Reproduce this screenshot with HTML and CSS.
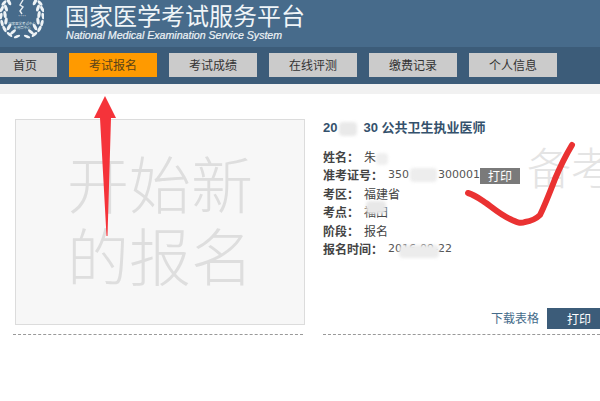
FILE: index.html
```html
<!DOCTYPE html>
<html lang="zh-CN">
<head>
<meta charset="utf-8">
<title>国家医学考试服务平台</title>
<link rel="stylesheet" href="styles.css">
</head>
<body>
<header class="masthead">
  <svg class="logo" viewBox="0 0 44 40" aria-hidden="true">
    <g class="leaves">
      <g id="wing">
        <ellipse cx="9" cy="2" rx="1.6" ry="3.6" transform="rotate(-28 9 2)"/>
        <ellipse cx="4" cy="3" rx="1.5" ry="3.4" transform="rotate(40 4 3)"/>
        <ellipse cx="6" cy="8" rx="1.6" ry="3.6" transform="rotate(-18 6 8)"/>
        <ellipse cx="1.8" cy="9" rx="1.5" ry="3.4" transform="rotate(28 1.8 9)"/>
        <ellipse cx="5" cy="14.5" rx="1.6" ry="3.6" transform="rotate(-8 5 14.5)"/>
        <ellipse cx="1" cy="16" rx="1.5" ry="3.4" transform="rotate(10 1 16)"/>
        <ellipse cx="6" cy="21" rx="1.6" ry="3.6" transform="rotate(8 6 21)"/>
        <ellipse cx="2" cy="23" rx="1.5" ry="3.4" transform="rotate(-12 2 23)"/>
        <ellipse cx="9" cy="27" rx="1.6" ry="3.6" transform="rotate(28 9 27)"/>
        <ellipse cx="4.5" cy="29" rx="1.5" ry="3.4" transform="rotate(-28 4.5 29)"/>
        <ellipse cx="13" cy="32" rx="1.5" ry="3.6" transform="rotate(48 13 32)"/>
        <ellipse cx="9.5" cy="34.5" rx="1.4" ry="3.4" transform="rotate(-50 9.5 34.5)"/>
        <ellipse cx="17" cy="36.5" rx="1.3" ry="3.4" transform="rotate(68 17 36.5)"/>
      </g>
      <use href="#wing" transform="matrix(-1 0 0 1 44 0)"/>
    </g>
    <path class="bolt" d="M23 0 L20 5 L23 7 L20 11 L22 14"/>
    <text class="logo-stars" x="22" y="17.5">* * * *</text>
    <text class="logo-text" x="22" y="24.5">国家医学考试中心</text>
    <text class="logo-text" x="22" y="29">专用章中心</text>
  </svg>
  <div class="brand">
    <h1 class="brand-cn">国家医学考试服务平台</h1>
    <p class="brand-en">National Medical Examination Service System</p>
  </div>
</header>

<nav class="nav">
  <a class="nav-item nav-first">首页</a>
  <a class="nav-item nav-active">考试报名</a>
  <a class="nav-item">考试成绩</a>
  <a class="nav-item">在线评测</a>
  <a class="nav-item">缴费记录</a>
  <a class="nav-item">个人信息</a>
</nav>
<div class="strip"></div>

<main class="main">
  <section class="left">
    <div class="new-card">开始新的报名</div>
  </section>
  <section class="right">
    <h2 class="title">20<span class="gap gap-title"></span>30 公共卫生执业医师</h2>
    <dl class="fields">
      <div class="field"><dt>姓名&#xFF1A;</dt><dd>朱<span class="gap gap-name"></span></dd></div>
      <div class="field"><dt>准考证号&#xFF1A;</dt><dd class="num">350<span class="gap gap-id"></span>300001<a class="print-small">打印</a></dd></div>
      <div class="field"><dt>考区&#xFF1A;</dt><dd>福建省</dd></div>
      <div class="field"><dt>考点&#xFF1A;</dt><dd class="covered cover-site">福田</dd></div>
      <div class="field"><dt>阶段&#xFF1A;</dt><dd>报名</dd></div>
      <div class="field"><dt>报名时间&#xFF1A;</dt><dd class="num covered cover-date">2016-09-22</dd></div>
    </dl>
    <div class="actions">
      <a class="download">下载表格</a>
      <a class="print-big">打印</a>
    </div>
    <div class="ghost">备考</div>
  </section>
</main>

<svg class="annotations" viewBox="0 0 600 401" aria-hidden="true">
  <path class="arrow" d="M105 96 L116 118 L111 118 L107.500 236 L106.500 236 L100 118 L94 118 Z"/>
  <path class="tick" d="M468 193 C475 195 480 199 486 203 C494 209 501 215 510 219 C516 222 520 224 525 222 C531 221 536 219 540 215 C545 205 550 192 555 179 C560 167 566 155 572 145"/>
</svg>
</body>
</html>
```
FILE: styles.css
```css
* { box-sizing: border-box; }
html, body { margin: 0; padding: 0; }
body {
  position: relative;
  width: 600px;
  height: 401px;
  overflow: hidden;
  background: #fff;
  font: 12px/18.4px "Liberation Sans", "Noto Sans CJK SC", sans-serif;
  color: #444;
}
.masthead {
  display: flex;
  height: 47px;
  background: #476b8b;
}
.logo { flex: none; width: 44px; height: 40px; }
.leaves { fill: #eef3f6; }
.bolt { fill: none; stroke: #e8eef2; stroke-width: 1.4; }
.logo-stars { fill: #e8eef2; font: 3px "Liberation Sans", sans-serif; text-anchor: middle; }
.logo-text { fill: #dfe7ec; font: 3.4px "Noto Sans CJK SC", sans-serif; text-anchor: middle; }
.brand { margin-left: 21px; padding-top: 2px; }
.brand-cn {
  margin: 0;
  font: 400 24px/26px "Noto Sans CJK SC", sans-serif;
  color: #f0f5f8;
}
.brand-en {
  margin: 1px 0 0 1px;
  font: italic 400 10.6px/13px "Liberation Sans", sans-serif;
  color: #eef3f6;
  -webkit-text-stroke: 0.2px #eef3f6;
  white-space: nowrap;
}
.nav {
  display: flex;
  gap: 12px;
  height: 37px;
  padding-top: 6px;
  background: #3c5c79;
}
.nav-item {
  flex: none;
  width: 88px;
  height: 24px;
  background: #cbcbcb;
  color: #333;
  font: 12px/24px "Noto Sans CJK SC", sans-serif;
  text-align: center;
}
.nav-first { width: 57px; padding-left: 13px; text-align: left; }
.nav-active { background: #ff9a00; color: #5a4318; }
.strip { height: 10px; background: #f1f1f1; }
.main {
  display: flex;
  gap: 20px;
  padding: 25px 0 0 13px;
}
.left {
  flex: none;
  width: 290px;
  padding-bottom: 9px;
  border-bottom: 1px dashed #999;
}
.new-card {
  width: 290px;
  height: 206px;
  margin-left: 2px;
  padding: 26px 50px 0;
  border: 1px solid #dcdcdc;
  background: #f7f7f7;
  color: #dedede;
  font: 300 62px/72px "Noto Sans CJK SC", sans-serif;
  text-align: center;
}
.right {
  position: relative;
  flex: 1;
  display: flex;
  flex-direction: column;
  padding-bottom: 5px;
  border-bottom: 1px dashed #999;
  overflow: hidden;
}
.title {
  margin: 0 0 11px;
  font: 700 13px/18px "Liberation Sans", "Noto Sans CJK SC", sans-serif;
  color: #34516c;
  white-space: nowrap;
}
.gap {
  display: inline-block;
  height: 14px;
  vertical-align: middle;
  background: #e9e9e9;
  border-radius: 4px;
  filter: blur(1.5px);
}
.gap-title { width: 18px; margin: 0 6px 0 2px; }
.gap-name { width: 12px; height: 12px; background: #efefef; }
.gap-id { width: 27px; background: #ededed; margin: 0 1px; }
.fields { margin: 0; }
.field { display: flex; height: 18.4px; }
.field dt { flex: none; margin-right: 5px; font-weight: 700; color: #444; font-family: "Noto Sans CJK SC", sans-serif; }
.field dd { margin: 0; white-space: nowrap; font-family: "Noto Sans CJK SC", sans-serif; }
.field .num { font-family: "DejaVu Sans", "Noto Sans CJK SC", sans-serif; font-size: 11px; color: #555; }
.covered { position: relative; }
.covered::after {
  content: "";
  position: absolute;
  background: #ececec;
  border-radius: 4px;
  filter: blur(1.5px);
}
.cover-site::after { left: 2px; top: -2px; width: 20px; height: 13px; background: #e8e8e8; }
.cover-date::after { left: 11px; top: 5px; width: 40px; height: 13px; }
.print-small {
  display: inline-block;
  width: 40px;
  height: 16px;
  margin: 2px 0 0 0;
  background: #7a7a7a;
  color: #fff;
  font: 12px/16px "Noto Sans CJK SC", sans-serif;
  text-align: center;
  vertical-align: top;
}
.actions {
  display: flex;
  justify-content: flex-end;
  align-items: center;
  gap: 8px;
  margin-top: auto;
}
.download { color: #456b8a; font-family: "Noto Sans CJK SC", sans-serif; }
.print-big {
  width: 53px;
  height: 21px;
  padding-left: 20px;
  background: #3c5c79;
  color: #fff;
  font: 12px/21px "Noto Sans CJK SC", sans-serif;
}
.ghost {
  position: absolute;
  left: 204px;
  top: 22px;
  color: #e4e4e4;
  font: 300 44px/50px "Noto Sans CJK SC", sans-serif;
  white-space: nowrap;
}
.annotations {
  position: absolute;
  left: 0;
  top: 0;
  width: 600px;
  height: 401px;
  pointer-events: none;
}
.arrow { fill: #f5333a; }
.tick {
  fill: none;
  stroke: #ea3232;
  stroke-width: 6;
  stroke-linecap: round;
  stroke-linejoin: round;
}
```
